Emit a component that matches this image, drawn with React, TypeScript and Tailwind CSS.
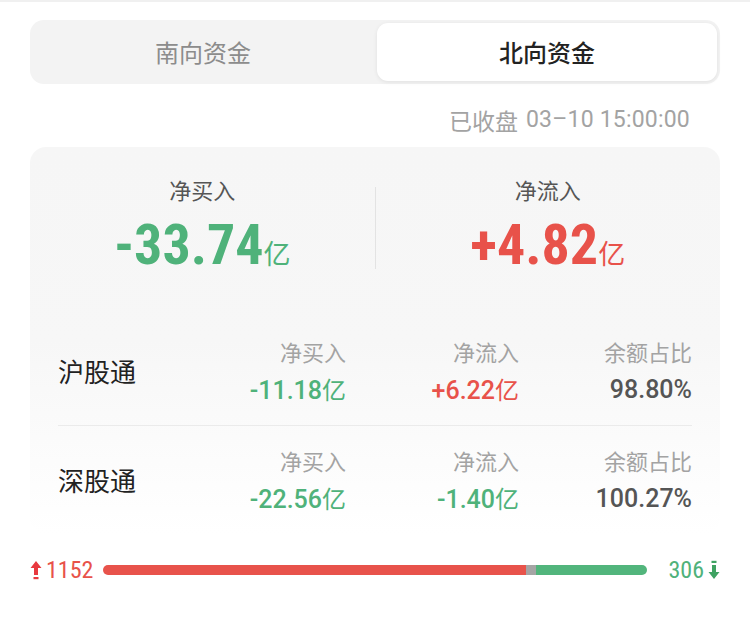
import React from "react";

const NUMC = "font-['Roboto','Noto_Sans_CJK_SC',sans-serif] [font-stretch:condensed]";
const NUM = "font-['Roboto','Noto_Sans_CJK_SC',sans-serif]";
const CJKF = "font-['Noto_Sans_CJK_SC','Noto_Sans',sans-serif]";

const GREEN = "text-[#4fb27a]";
const RED = "text-[#e8524a]";

function Col({ label, children }: { label: string; children: React.ReactNode }) {
  return (
    <div className="w-[173px] flex flex-col items-end">
      <div className="text-[22px] leading-[28px] text-[#a3a3a3]">{label}</div>
      <div className="mt-[10px] h-[30px] flex items-center whitespace-nowrap">{children}</div>
    </div>
  );
}

function Val({ v, cls }: { v: string; cls: string }) {
  return (
    <span className={cls}>
      <span className={`${NUM} text-[25px] font-medium`}>{v}</span>
      <span className={`${CJKF} text-[24px] font-normal`}>亿</span>
    </span>
  );
}

function Row({ name, a, b, c, aCls, bCls }: { name: string; a: string; b: string; c: string; aCls: string; bCls: string }) {
  return (
    <div className="h-[108px] flex items-center">
      <div className="flex-1 text-[26px] text-[#222] leading-none">{name}</div>
      <Col label="净买入">
        <Val v={a} cls={aCls} />
      </Col>
      <Col label="净流入">
        <Val v={b} cls={bCls} />
      </Col>
      <Col label="余额占比">
        <span className={`${NUM} text-[#555] text-[25px] font-medium`}>{c}</span>
      </Col>
    </div>
  );
}

function Big({ v, cls }: { v: string; cls: string }) {
  return (
    <span className={`${cls} whitespace-nowrap`}>
      <span className={`${NUMC} text-[56px] font-bold`}>{v}</span>
      <span className={`${CJKF} text-[27px] font-normal`}>亿</span>
    </span>
  );
}

export default function App() {
  return (
    <div className={`w-[750px] h-[619px] bg-white border-t-2 border-[#f0f0f0] px-[30px] ${CJKF}`}>
      <div className="mt-[18px] h-[64px] rounded-[14px] bg-[#f3f3f3] p-[3px] flex">
        <div className="flex-1 flex items-center justify-center text-[24px] text-[#8c8c8c]">南向资金</div>
        <div className="flex-1 ml-[4px] flex items-center justify-center text-[24px] text-[#222] font-medium bg-white rounded-[11px] shadow-[0_1px_4px_rgba(0,0,0,0.08)]">北向资金</div>
      </div>
      <div className="h-[63px] pt-[22px] pr-[30px] flex justify-end items-start text-[23px] leading-[28px] text-[#a3a3a3]">
        <span>已收盘</span>
        <span className={`${NUM} ml-[8px] leading-[28px] tracking-[0.2px]`}>03–10 15:00:00</span>
      </div>
      <div className="rounded-[16px] bg-gradient-to-b from-[#f6f6f6] via-[#f7f7f7] to-[#ffffff]">
        <div className="h-[170px] flex pt-[26px]">
          <div className="flex-1 flex flex-col items-center">
            <div className="text-[22px] leading-[32px] text-[#555]">净买入</div>
            <div className="mt-[9px] h-[62px] flex items-center">
              <Big v="-33.74" cls={GREEN} />
            </div>
          </div>
          <div className="w-px h-[82px] mt-[14px] bg-[#e3e3e3]" />
          <div className="flex-1 flex flex-col items-center">
            <div className="text-[22px] leading-[32px] text-[#555]">净流入</div>
            <div className="mt-[9px] h-[62px] flex items-center">
              <Big v="+4.82" cls={RED} />
            </div>
          </div>
        </div>
        <div className="px-[28px]">
          <Row name="沪股通" a="-11.18" b="+6.22" c="98.80%" aCls={GREEN} bCls={RED} />
          <div className="h-px bg-[#ebebeb]" />
          <Row name="深股通" a="-22.56" b="-1.40" c="100.27%" aCls={GREEN} bCls={GREEN} />
        </div>
      </div>
      <div className="mt-[24px] flex items-center h-[24px]">
        <svg width="12" height="20" viewBox="0 0 12 20" className="shrink-0">
          <path d="M6 1 L11.5 8 L8 8 L8 15 L4 15 L4 8 L0.5 8 Z" fill="#e8393f" />
          <rect x="3.5" y="17" width="5" height="2.2" fill="#e8393f" />
        </svg>
        <span className={`${RED} ${NUMC} ml-[4px] text-[24px] leading-none`}>1152</span>
        <div className="flex-1 ml-[10px] mr-[21px] h-[10px] rounded-full overflow-hidden flex">
          <div className="w-[77.6%] bg-[#e8534b]" />
          <div className="w-[1.9%] bg-[#a5a5a5]" />
          <div className="flex-1 bg-[#52b57c]" />
        </div>
        <span className={`${GREEN} ${NUMC} text-[24px] leading-none`}>306</span>
        <svg width="12" height="20" viewBox="0 0 12 20" className="shrink-0 ml-[4px]">
          <rect x="3.5" y="0.8" width="5" height="2.2" fill="#3fa262" />
          <path d="M6 19 L11.5 12 L8 12 L8 5 L4 5 L4 12 L0.5 12 Z" fill="#3fa262" />
        </svg>
      </div>
    </div>
  );
}
